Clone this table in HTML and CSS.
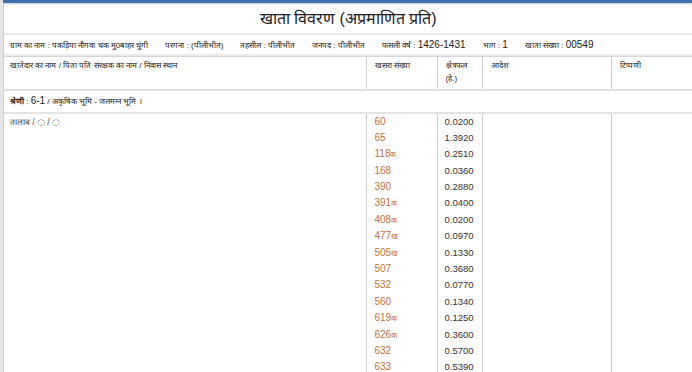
FILE: index.html
```html
<!DOCTYPE html>
<html lang="hi">
<head>
<meta charset="utf-8">
<title>खाता विवरण</title>
<link rel="stylesheet" href="styles.css">
</head>
<body>
<div class="topbar"></div>
<div class="page">
  <h1 class="title">खाता विवरण (अप्रमाणित प्रति)</h1>
  <div class="info">
    <span>ग्राम का नाम : पकड़िया नौगवा चक मु0बाहर चुंगी</span>
    <span>परगना : (पीलीभीत)</span>
    <span>तहसील : पीलीभीत</span>
    <span>जनपद : पीलीभीत</span>
    <span>फसली वर्ष : <b class="num">1426-1431</b></span>
    <span>भाग : <b class="num">1</b></span>
    <span>खाता संख्या : <b class="num">00549</b></span>
  </div>
  <table class="grid">
    <colgroup>
      <col class="c-name"><col class="c-khasra"><col class="c-area"><col class="c-order"><col class="c-note">
    </colgroup>
    <thead>
      <tr>
        <th>खातेदार का नाम / पिता पति संरक्षक का नाम / निवास स्थान</th>
        <th>खसरा संख्या</th>
        <th>क्षेत्रफल<br>(हे.)</th>
        <th>आदेश</th>
        <th>टिप्पणी</th>
      </tr>
    </thead>
    <tbody>
      <tr class="cat">
        <td colspan="5"><b>श्रेणी</b> : <span class="num">6-1</span> / अकृषिक भूमि - जलमग्न भूमि ।</td>
      </tr>
      <tr class="data">
        <td class="owner">तालाब / <span class="mark">◌</span> / <span class="mark">◌</span></td>
        <td class="khasra">
          <div>60</div><div>65</div><div>118<small>क</small></div><div>168</div><div>390</div>
          <div>391<small>क</small></div><div>408<small>क</small></div><div>477<small>ख</small></div>
          <div>505<small>ख</small></div><div>507</div><div>532</div><div>560</div>
          <div>619<small>क</small></div><div>626<small>क</small></div><div>632</div><div>633</div>
        </td>
        <td class="area">
          <div>0.0200</div><div>1.3920</div><div>0.2510</div><div>0.0360</div><div>0.2880</div>
          <div>0.0400</div><div>0.0200</div><div>0.0970</div><div>0.1330</div><div>0.3680</div>
          <div>0.0770</div><div>0.1340</div><div>0.1250</div><div>0.3600</div><div>0.5700</div><div>0.5390</div>
        </td>
        <td></td>
        <td></td>
      </tr>
    </tbody>
  </table>
</div>
</body>
</html>
```
FILE: styles.css
```css
html, body {
  margin: 0;
  padding: 0;
  background: #ffffff;
}
body {
  font-family: "Liberation Sans", Arial, sans-serif;
  color: #333333;
  border-left: 3px solid #e6e6e6;
  height: 372px;
  overflow: hidden;
}
.topbar {
  height: 3px;
  background: #3d72ad;
  box-shadow: 0 1px 2px rgba(60, 100, 150, 0.35);
}
.page {
  border-left: 1px solid #cfcfcf;
  height: 369px;
}
.title {
  margin: 0;
  height: 30px;
  line-height: 31px;
  text-align: center;
  font-size: 16px;
  font-weight: normal;
  color: #222222;
  border-bottom: 2px solid #ebebeb;
}
.info {
  display: flex;
  gap: 17px;
  height: 19px;
  align-items: center;
  padding-left: 6px;
  font-size: 8px;
  color: #222222;
  border-bottom: 2px solid #ebebeb;
}
.num {
  font-weight: normal;
  font-size: 10px;
}
.grid {
  width: 100%;
  border-collapse: collapse;
  table-layout: fixed;
  font-size: 8px;
}
.c-name { width: 362px; }
.c-khasra { width: 71px; }
.c-area { width: 45px; }
.c-order { width: 129px; }
.grid th {
  height: 33px;
  text-align: left;
  vertical-align: top;
  font-weight: normal;
  padding: 2px 8px 0;
  line-height: 13px;
  color: #222222;
  border-top: 1px solid #d6d6d6;
  border-bottom: 2px solid #e0e0e0;
  border-left: 1px solid #cccccc;
  box-sizing: border-box;
}
.grid th:first-child {
  border-left: none;
  padding-left: 6px;
}
.cat td {
  height: 20px;
  padding: 0 6px 1px;
  border-bottom: 2px solid #e4e4e4;
  color: #222222;
}
.cat .num { font-size: 10px; }
.data td {
  vertical-align: top;
  padding: 0 8px;
  border-left: 1px solid #cccccc;
}
.data td.owner {
  border-left: none;
  padding-left: 6px;
  line-height: 16px;
  font-size: 8.5px;
  color: #444444;
}
.owner .mark {
  font-family: "DejaVu Sans", sans-serif;
  font-size: 9px;
}
.data td.area {
  padding: 0 4px 0 7px;
}
.khasra div,
.area div {
  height: 16.4px;
  line-height: 16.4px;
  white-space: nowrap;
}
.khasra {
  color: #c4703d;
  font-size: 10px;
}
.khasra small { font-size: 8px; }
.area {
  font-size: 9.5px;
  color: #333333;
}
```
